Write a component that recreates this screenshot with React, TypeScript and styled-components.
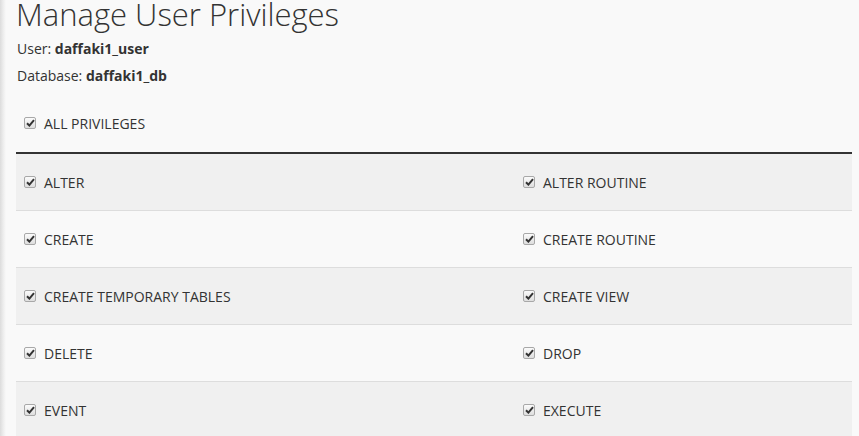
import * as React from "react"
import styled, { createGlobalStyle } from "styled-components"

const privileges: [string, string][] = [
  ["ALTER", "ALTER ROUTINE"],
  ["CREATE", "CREATE ROUTINE"],
  ["CREATE TEMPORARY TABLES", "CREATE VIEW"],
  ["DELETE", "DROP"],
  ["EVENT", "EXECUTE"],
]

const Check: React.FC = () => (
  <Box>
    <svg width="9" height="8" viewBox="0 0 9 8">
      <path d="M1 4.2 L3.4 6.6 L8 1.2" fill="none" stroke="#333" strokeWidth="2" />
    </svg>
  </Box>
)

const App: React.FC = () => {
  return (
    <Page>
      <GlobalStyle />
      <EdgeShade />
      <Content>
        <Title>Manage User Privileges</Title>
        <Meta $first>
          User: <b>daffaki1_user</b>
        </Meta>
        <Meta>
          Database: <b>daffaki1_db</b>
        </Meta>

        <AllRow>
          <Check />
          <span>ALL PRIVILEGES</span>
        </AllRow>

        <Table>
          {privileges.map(([a, b], i) => (
            <Row key={a} $odd={i % 2 === 0}>
              <Cell>
                <Check />
                <span>{a}</span>
              </Cell>
              <Cell>
                <Check />
                <span>{b}</span>
              </Cell>
            </Row>
          ))}
        </Table>
      </Content>
    </Page>
  )
}

export default App

/* ---------------- styles ---------------- */

const GlobalStyle = createGlobalStyle`
  html, body {
    margin: 0;
    padding: 0;
    background: #f9f9f9;
    overflow: hidden;
  }
  body {
    font-family: "Open Sans", "Liberation Sans", sans-serif;
    color: #333;
  }
`

const Page = styled.div({
  display: "flex",
  height: "436px",
  background: "#f9f9f9",
})

const EdgeShade = styled.div({
  width: "6px",
  flexShrink: 0,
  background: "linear-gradient(to right, #dcdcdc, #ececec 50%, #f9f9f9)",
})

const Content = styled.div({
  flex: 1,
  padding: "0 7px 0 10px",
  display: "flex",
  flexDirection: "column",
})

const Title = styled.h1({
  margin: "-6px 0 0 0",
  fontSize: "31px",
  fontWeight: 300,
  lineHeight: "40px",
  color: "#333",
})

const Meta = styled.div<{ $first?: boolean }>(({ $first }) => ({
  fontSize: "14px",
  lineHeight: "18px",
  marginTop: $first ? "6px" : "9px",
  paddingLeft: "1px",
  color: "#333",
  "& b": { fontWeight: 700 },
}))

const AllRow = styled.label({
  display: "flex",
  alignItems: "center",
  gap: "8px",
  padding: "0 8px",
  marginTop: "29px",
  height: "18px",
  fontSize: "14px",
  color: "#333",
})

const Table = styled.div({
  marginTop: "20px",
  borderTop: "2px solid #333",
})

const Row = styled.div<{ $odd?: boolean }>(({ $odd }) => ({
  display: "grid",
  gridTemplateColumns: "499px 1fr",
  height: "56px",
  borderBottom: "1px solid #ddd",
  background: $odd ? "#f0f0f0" : "#f9f9f9",
}))

const Cell = styled.label({
  display: "flex",
  alignItems: "center",
  gap: "8px",
  padding: "0 8px",
  fontSize: "14px",
  color: "#333",
})

const Box = styled.span({
  width: "10px",
  height: "10px",
  border: "1px solid #a8a8a8",
  borderRadius: "2px",
  background: "linear-gradient(#fbfbfb, #dedede)",
  display: "grid",
  placeItems: "center",
  flexShrink: 0,
})
